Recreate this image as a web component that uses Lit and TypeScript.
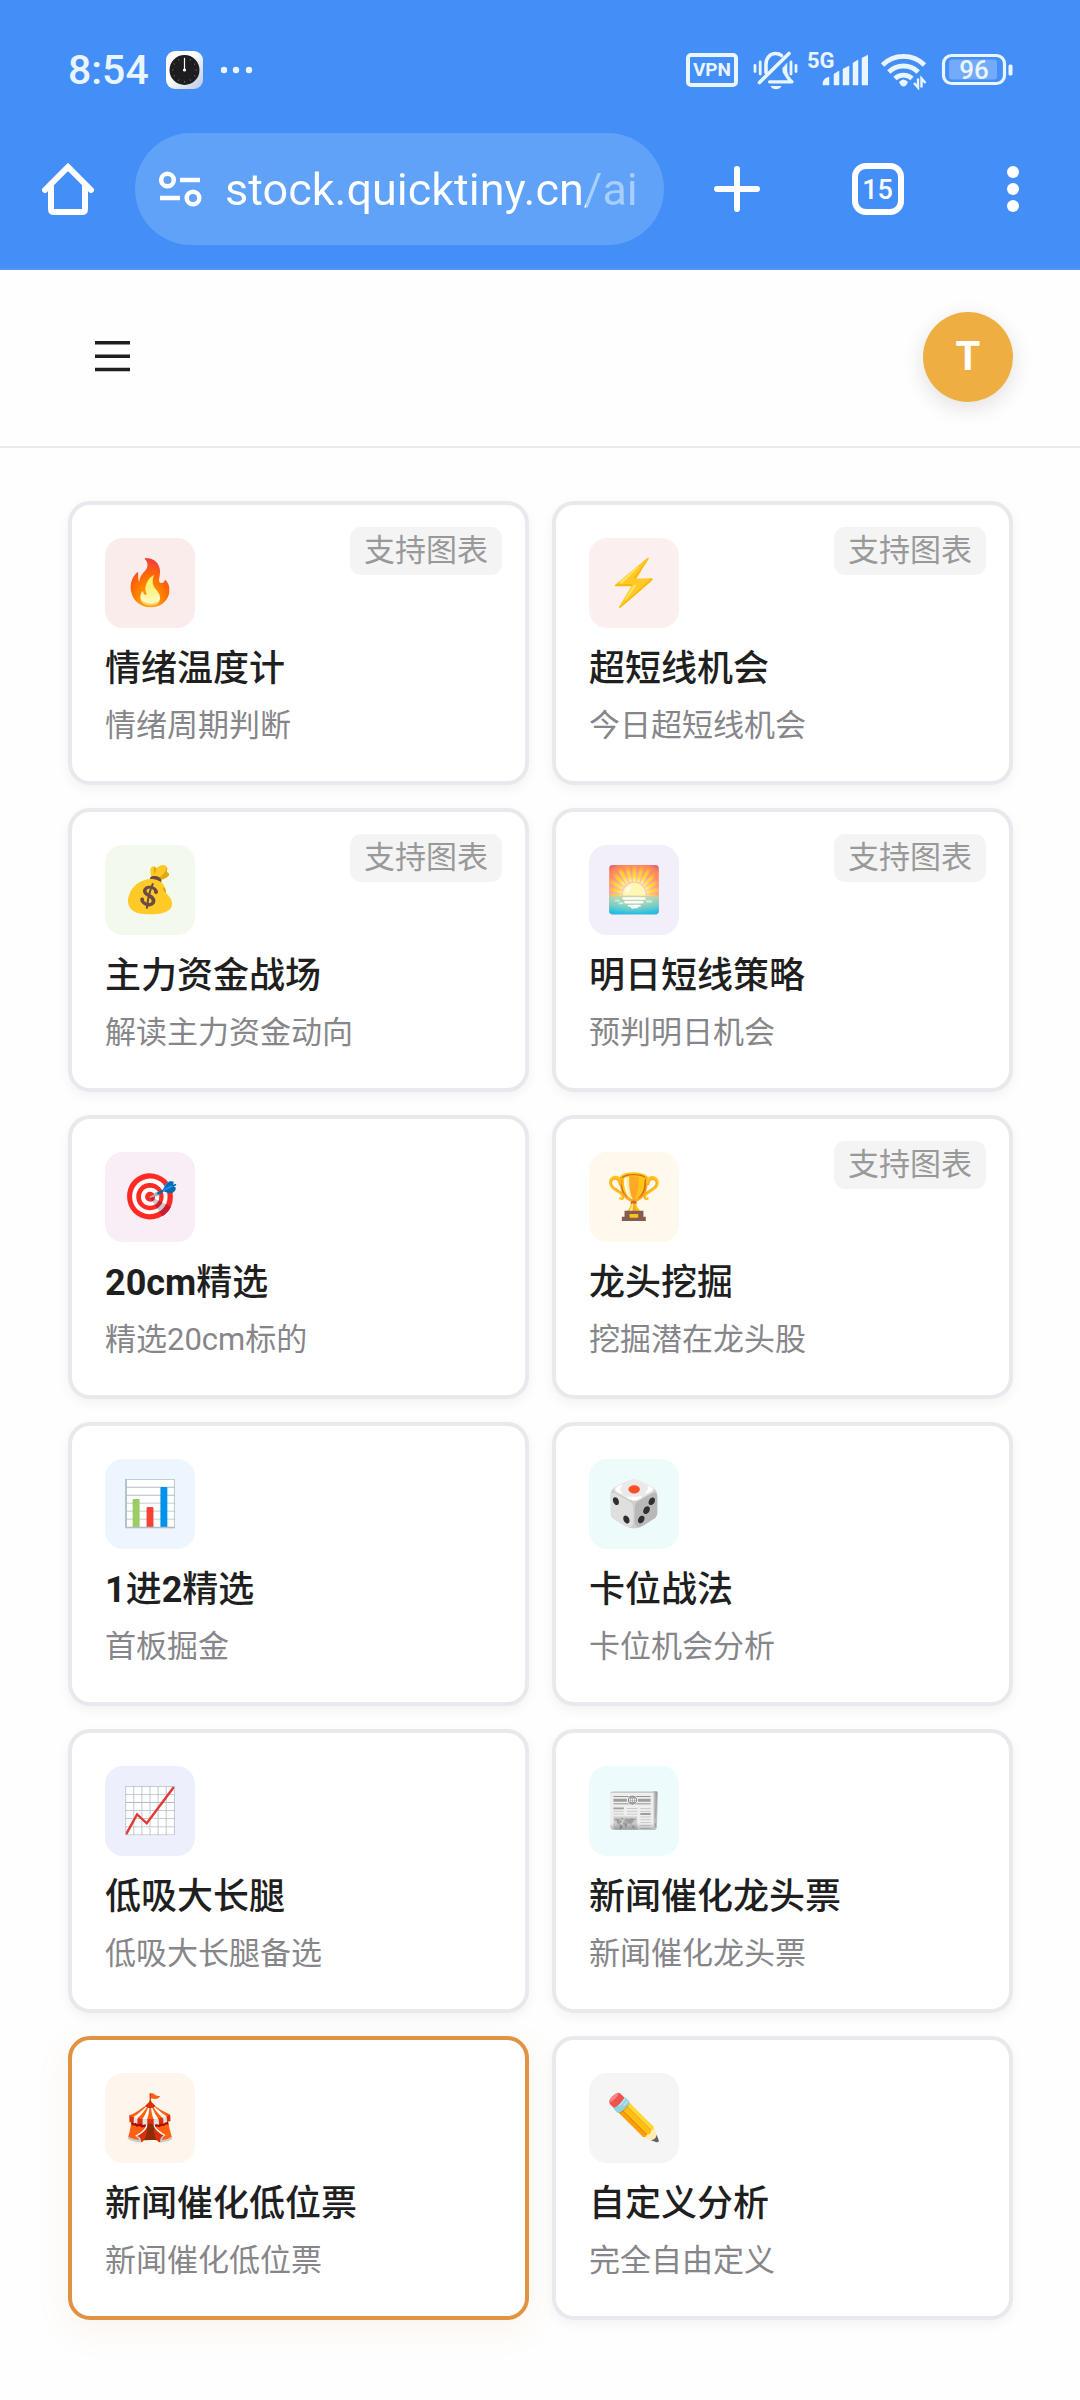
import { LitElement, html, css, svg } from "lit";
import { customElement, property, state } from "lit/decorators.js";
import { classMap } from "lit/directives/class-map.js";

interface Topic {
  id: string;
  emoji: string;
  title: string;
  desc: string;
  chart: boolean;
}

const TOPICS: Topic[] = [
  { id: "fire", emoji: "🔥", title: "情绪温度计", desc: "情绪周期判断", chart: true },
  { id: "bolt", emoji: "⚡", title: "超短线机会", desc: "今日超短线机会", chart: true },
  { id: "money", emoji: "💰", title: "主力资金战场", desc: "解读主力资金动向", chart: true },
  { id: "sunrise", emoji: "🌅", title: "明日短线策略", desc: "预判明日机会", chart: true },
  { id: "target", emoji: "🎯", title: "20cm精选", desc: "精选20cm标的", chart: false },
  { id: "trophy", emoji: "🏆", title: "龙头挖掘", desc: "挖掘潜在龙头股", chart: true },
  { id: "bars", emoji: "📊", title: "1进2精选", desc: "首板掘金", chart: false },
  { id: "dice", emoji: "🎲", title: "卡位战法", desc: "卡位机会分析", chart: false },
  { id: "trend", emoji: "📈", title: "低吸大长腿", desc: "低吸大长腿备选", chart: false },
  { id: "news", emoji: "📰", title: "新闻催化龙头票", desc: "新闻催化龙头票", chart: false },
  { id: "tent", emoji: "🎪", title: "新闻催化低位票", desc: "新闻催化低位票", chart: false },
  { id: "pencil", emoji: "✏️", title: "自定义分析", desc: "完全自由定义", chart: false },
];

@customElement("status-bar")
export class StatusBar extends LitElement {
  static styles = css`
    :host {
      display: flex;
      justify-content: space-between;
      padding: 50px 67px 43px 68px;
      color: #e9f5ff;
      font-family: Roboto, "Liberation Sans", sans-serif;
    }
    .side {
      display: flex;
      align-items: center;
      height: 40px;
    }
    .left {
      gap: 17px;
    }
    .right {
      gap: 9px;
    }
    .time {
      font-size: 41px;
      line-height: 40px;
      font-weight: 500;
    }
    .vpn {
      box-sizing: border-box;
      width: 52px;
      height: 34px;
      margin-right: 6px;
      border: 4px solid currentColor;
      border-radius: 5px;
      font-size: 19px;
      line-height: 26px;
      font-weight: 700;
      text-align: center;
    }
    svg {
      display: block;
    }
    .net {
      font: 700 22px Roboto, sans-serif;
    }
    .level {
      font: 500 26px Roboto, sans-serif;
    }
  `;

  render() {
    const ticks = Array.from({ length: 12 }, (_, i) => i * 30);
    return html`
      <div class="side left">
        <span class="time">8:54</span>
        <svg width="37" height="38" viewBox="0 0 37 38" aria-hidden="true">
          <defs>
            <linearGradient id="case" x1="0" y1="0" x2="1" y2="1">
              <stop offset="0.4" stop-color="#fff" />
              <stop offset="1" stop-color="#b9c8e2" />
            </linearGradient>
          </defs>
          <rect width="37" height="38" rx="9" fill="url(#case)" />
          <circle cx="18.500" cy="19" r="15" fill="#1d1d1f" />
          ${ticks.map(
            (a) => svg`<path d="M18.500 6.500v1.500" stroke="#777" stroke-width="0.800" transform="rotate(${a} 18.500 19)" />`
          )}
          <path d="M18.500 7v12" stroke="#fff" stroke-width="1.200" />
          <circle cx="18.500" cy="19" r="1.600" fill="#fff" />
        </svg>
        <svg width="34" height="8" viewBox="0 0 34 8" fill="currentColor" aria-hidden="true">
          <circle cx="4" cy="4" r="3.200" />
          <circle cx="16" cy="4" r="3.200" />
          <circle cx="29" cy="4" r="3.200" />
        </svg>
      </div>
      <div class="side right">
        <span class="vpn">VPN</span>
        <svg width="45" height="40" viewBox="0 0 45 40" fill="none" stroke="currentColor" stroke-width="3.600" stroke-linecap="round" aria-hidden="true">
          <path d="M13 22.500v-8C13 8 17 3.500 22.500 3.500c2.500 0 4.500 .7 6 2" />
          <path d="M36 3.500 6.500 32.500" />
          <path d="M16.500 31.800h22.500" stroke-width="3.200" />
          <path d="M34 13.500v7.500q0 4 5.800 10l-3 1.500q-3-3.500-7-10.500v-4z" fill="currentColor" stroke-width="0.500" stroke-linejoin="round" />
          <path d="M17.500 36h11c-1 2.500-3 3.200-5.500 3.200s-4.500-.7-5.500-3.200z" fill="currentColor" stroke="none" />
          <path d="M2 15.500v6M7.200 12v12M38 12v12M43 15.500v6" stroke-width="2.800" />
        </svg>
        <svg width="61" height="50" viewBox="0 -5 61 50" fill="currentColor" aria-label="5G">
          <text class="net" x="0" y="18">5G</text>
          <path d="M16 35v-3q1-4 6-5v8zM27 35V24l5-3v14zM36 35V19l6-3v19zM46 35V13l5-3v25zM55 35V8l6-3v30z" stroke="currentColor" stroke-width="0.500" stroke-linejoin="round" />
        </svg>
        <svg width="50" height="40" viewBox="0 0 50 40" fill="none" stroke="currentColor" stroke-width="4.800" aria-hidden="true">
          <path d="M5.500 15a30 30 0 0 1 42 0" />
          <path d="M11.800 22a21 21 0 0 1 29.400 0" />
          <path d="M18 28.500a12.500 12.500 0 0 1 17 0" />
          <path d="M22 32q4.500-5 9 0q-2 4.500-4.500 4.500T22 32z" fill="currentColor" stroke="none" />
          <path d="M41 28.500v9l-4-4.500M44.500 37.500v-9l4 4.500" stroke-width="2.400" />
        </svg>
        <svg width="77" height="40" viewBox="0 0 77 40" aria-label="96%">
          <rect x="7.500" y="5.500" width="61" height="28" rx="8" fill="none" stroke="currentColor" stroke-width="3.200" />
          <rect x="13" y="9.500" width="48" height="20" rx="3" fill="#fff" opacity="0.250" />
          <rect x="72.500" y="14.500" width="4" height="11" rx="1.500" fill="currentColor" />
          <text class="level" x="38" y="29" text-anchor="middle" fill="currentColor">96</text>
        </svg>
      </div>
    `;
  }
}

@customElement("browser-toolbar")
export class BrowserToolbar extends LitElement {
  static styles = css`
    :host {
      display: flex;
      align-items: center;
      padding-bottom: 23px;
      border-bottom: 2px solid #5396f2;
      color: #fff;
      font-family: Roboto, "Liberation Sans", sans-serif;
    }
    button {
      display: flex;
      justify-content: center;
      align-items: center;
      width: 135px;
      height: 112px;
      padding: 0;
      border: 0;
      background: none;
      color: inherit;
      font: inherit;
      cursor: pointer;
    }
    .address {
      display: flex;
      align-items: center;
      gap: 23px;
      flex: 1;
      min-width: 0;
      height: 112px;
      box-sizing: border-box;
      padding: 0 16px 0 24px;
      border-radius: 56px;
      background: #5fa2f8;
    }
    .address svg {
      flex: none;
    }
    .url {
      flex: 1;
      min-width: 0;
      padding: 2px 0 0;
      border: 0;
      outline: 0;
      color: #fff;
      font: 400 45px/56px Roboto, "Liberation Sans", sans-serif;
      background: linear-gradient(90deg, #fff 361px, #a8cefc 361px);
      -webkit-background-clip: text;
      background-clip: text;
      -webkit-text-fill-color: transparent;
    }
    .add {
      width: 146px;
    }
    .count {
      box-sizing: border-box;
      width: 52px;
      height: 52px;
      border: 6px solid currentColor;
      border-radius: 14px;
      font-size: 27px;
      line-height: 42px;
      font-weight: 500;
    }
  `;

  render() {
    return html`
      <button aria-label="主页">
        <svg width="52" height="52" viewBox="0 0 52 52" fill="none" stroke="currentColor" stroke-width="6" stroke-linecap="round" aria-hidden="true">
          <path d="M3 27 26 4l23 23" />
          <path d="M9 24v22q0 3 3 3h28q3 0 3-3V24" />
        </svg>
      </button>
      <label class="address">
        <svg width="43" height="36" viewBox="0 0 43 36" fill="none" stroke="currentColor" stroke-width="4.500" aria-hidden="true">
          <circle cx="8.500" cy="9" r="6.300" />
          <path d="M21 9h20M1 27h20" />
          <circle cx="34" cy="27" r="6.300" />
        </svg>
        <input class="url" type="text" aria-label="网址" .value=${"stock.quicktiny.cn/ai"} />
      </label>
      <button class="add" aria-label="新标签页">
        <svg width="46" height="46" viewBox="0 0 46 46" stroke="currentColor" stroke-width="6" stroke-linecap="round" aria-hidden="true">
          <path d="M23 3v40M3 23h40" />
        </svg>
      </button>
      <button aria-label="标签页"><span class="count">15</span></button>
      <button aria-label="菜单">
        <svg width="12" height="46" viewBox="0 0 12 46" fill="currentColor" aria-hidden="true">
          <circle cx="6" cy="6" r="6" />
          <circle cx="6" cy="23" r="6" />
          <circle cx="6" cy="40" r="6" />
        </svg>
      </button>
    `;
  }
}

@customElement("topic-card")
export class TopicCard extends LitElement {
  @property({ attribute: false }) topic!: Topic;
  @property({ type: Boolean }) selected = false;

  static styles = css`
    :host {
      display: block;
    }
    .card {
      position: relative;
      display: flex;
      flex-direction: column;
      align-items: flex-start;
      box-sizing: border-box;
      width: 100%;
      padding: 33px 33px 34px;
      border: 4px solid #e8e9ed;
      border-radius: 22px;
      background: #fff;
      box-shadow: 0 4px 12px rgba(0, 0, 0, 0.05);
      color: #1f1f1f;
      font-family: Roboto, "Noto Sans CJK SC", sans-serif;
      text-align: left;
      cursor: pointer;
    }
    .selected {
      border-color: #e19243;
      box-shadow: 0 10px 32px rgba(225, 146, 67, 0.1);
    }
    .icon {
      display: flex;
      justify-content: center;
      align-items: center;
      width: 90px;
      height: 90px;
      margin-bottom: 17px;
      border-radius: 18px;
      font-family: "Noto Color Emoji", sans-serif;
      font-size: 45px;
      line-height: 56px;
    }
    .fire { background: #fbecec; }
    .bolt { background: #fbf0ef; }
    .money { background: #f3f9ed; }
    .sunrise { background: #f2eefa; }
    .target { background: #f9edf6; }
    .trophy { background: #fff8ec; }
    .bars { background: #edf6fe; }
    .dice { background: #edfbfb; }
    .trend { background: #edf0fc; }
    .news { background: #edfbfc; }
    .tent { background: #fef5ec; }
    .pencil { background: #f5f5f5; }
    .title {
      font-size: 36px;
      line-height: 48px;
      font-weight: 500;
      margin-bottom: 12px;
    }
    .latin {
      font-weight: 700;
    }
    .desc {
      font-size: 31px;
      line-height: 42px;
      color: #86868a;
    }
    .badge {
      position: absolute;
      top: 22px;
      right: 23px;
      padding: 0 14px;
      border-radius: 11px;
      background: #f4f4f4;
      color: #999;
      font-size: 31px;
      line-height: 48px;
    }
  `;

  /** Latin letters and digits get a heavier weight than the Chinese text beside them. */
  private renderTitle(title: string) {
    return title
      .split(/([0-9A-Za-z]+)/)
      .filter((part) => part !== "")
      .map((part) => (/^[0-9A-Za-z]/.test(part) ? html`<b class="latin">${part}</b>` : part));
  }

  render() {
    const t = this.topic;
    return html`
      <button class=${classMap({ card: true, selected: this.selected })} aria-pressed=${this.selected ? "true" : "false"}>
        <span class="icon ${t.id}" aria-hidden="true">${t.emoji}</span>
        <span class="title">${this.renderTitle(t.title)}</span>
        <span class="desc">${t.desc}</span>
        ${t.chart ? html`<span class="badge">支持图表</span>` : null}
      </button>
    `;
  }
}

@customElement("app-root")
export class AppRoot extends LitElement {
  @state() private current = "tent";

  static styles = css`
    :host {
      display: block;
      min-height: 100vh;
      background: #fefefe;
      font-family: Roboto, "Noto Sans CJK SC", sans-serif;
    }
    .chrome {
      background: #448ef8;
    }
    .bar {
      display: flex;
      justify-content: space-between;
      align-items: center;
      padding: 42px 67px 44px 68px;
      border-bottom: 2px solid #e8e8ed;
    }
    button {
      display: flex;
      justify-content: center;
      align-items: center;
      width: 90px;
      height: 90px;
      padding: 0;
      border: 0;
      background: none;
      color: #1f1f1f;
      cursor: pointer;
    }
    .avatar {
      border-radius: 50%;
      background: #eeae42;
      box-shadow: 0 6px 22px rgba(0, 0, 0, 0.12);
      color: #fff;
      font: 700 40px/48px Roboto, sans-serif;
    }
    .grid {
      display: grid;
      grid-template-columns: 1fr 1fr;
      gap: 23px;
      padding: 53px 67px 80px 68px;
    }
  `;

  render() {
    return html`
      <header class="chrome">
        <status-bar></status-bar>
        <browser-toolbar></browser-toolbar>
      </header>
      <nav class="bar">
        <button aria-label="打开菜单">
          <svg width="36" height="32" viewBox="0 0 36 32" stroke="currentColor" stroke-width="3.500" aria-hidden="true">
            <path d="M0 1.800h35M0 15.200h35M0 28.500h35" />
          </svg>
        </button>
        <button class="avatar" aria-label="账户">T</button>
      </nav>
      <main class="grid">
        ${TOPICS.map(
          (t) => html`<topic-card .topic=${t} ?selected=${t.id === this.current} @click=${() => (this.current = t.id)}></topic-card>`
        )}
      </main>
    `;
  }
}
